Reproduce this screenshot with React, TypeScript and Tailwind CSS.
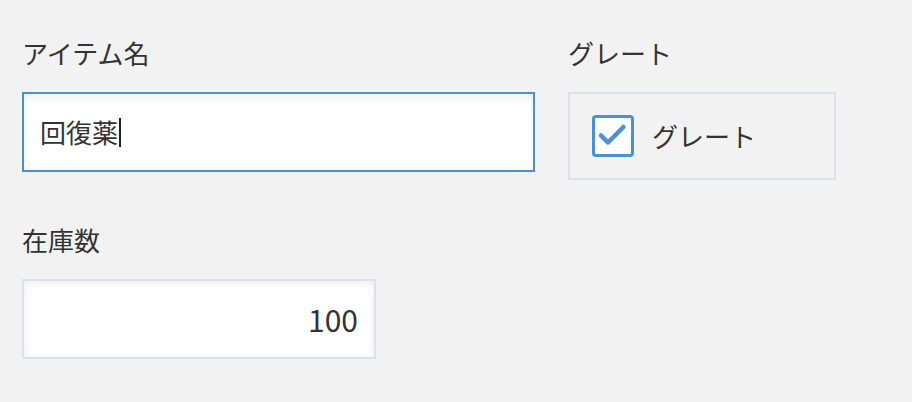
import React from "react";

const font = { fontFamily: '"Noto Sans CJK JP", "Noto Sans", sans-serif' };

export default function App() {
  return (
    <div className="min-h-[402px] w-[912px] bg-[#f2f2f2] pl-[22px] pt-[35px] text-[#333333]" style={font}>
      <div className="flex gap-[33px]">
        <div className="flex w-[513px] flex-col">
          <label className="mb-[21px] text-[26px] leading-[36px]">アイテム名</label>
          <div className="flex h-[80px] items-center border-2 border-[#4a90d9] bg-white pl-[16px] shadow-[inset_0_2px_8px_rgba(0,0,0,0.08)]">
            <span className="text-[26px] leading-none">回復薬</span>
            <span className="ml-[1px] inline-block h-[29px] w-[2px] bg-[#222]" />
          </div>
        </div>
        <div className="flex w-[268px] flex-col">
          <label className="mb-[21px] text-[26px] leading-[36px]">グレート</label>
          <div className="flex h-[88px] items-center gap-[18px] border-2 border-[#dde1e5] pl-[22px]">
            <div className="flex h-[42px] w-[42px] items-center justify-center rounded-[4px] border-[3px] border-[#4a90d9] bg-white">
              <svg width="36" height="36" viewBox="0 0 36 36">
                <path d="M6 17.5 L13 24.5 L28.5 9" fill="none" stroke="#4a90d9" strokeWidth="4.5" strokeLinecap="round" strokeLinejoin="round" />
              </svg>
            </div>
            <span className="text-[26px] leading-none">グレート</span>
          </div>
        </div>
      </div>
      <div className="mt-[42px] flex w-[354px] flex-col">
        <label className="mb-[21px] text-[26px] leading-[36px]">在庫数</label>
        <div className="flex h-[80px] items-center justify-end border-2 border-[#dde1e5] bg-white pr-[16px] shadow-[inset_0_2px_8px_rgba(0,0,0,0.08)]">
          <span className="text-[30px] leading-none">100</span>
        </div>
      </div>
    </div>
  );
}
